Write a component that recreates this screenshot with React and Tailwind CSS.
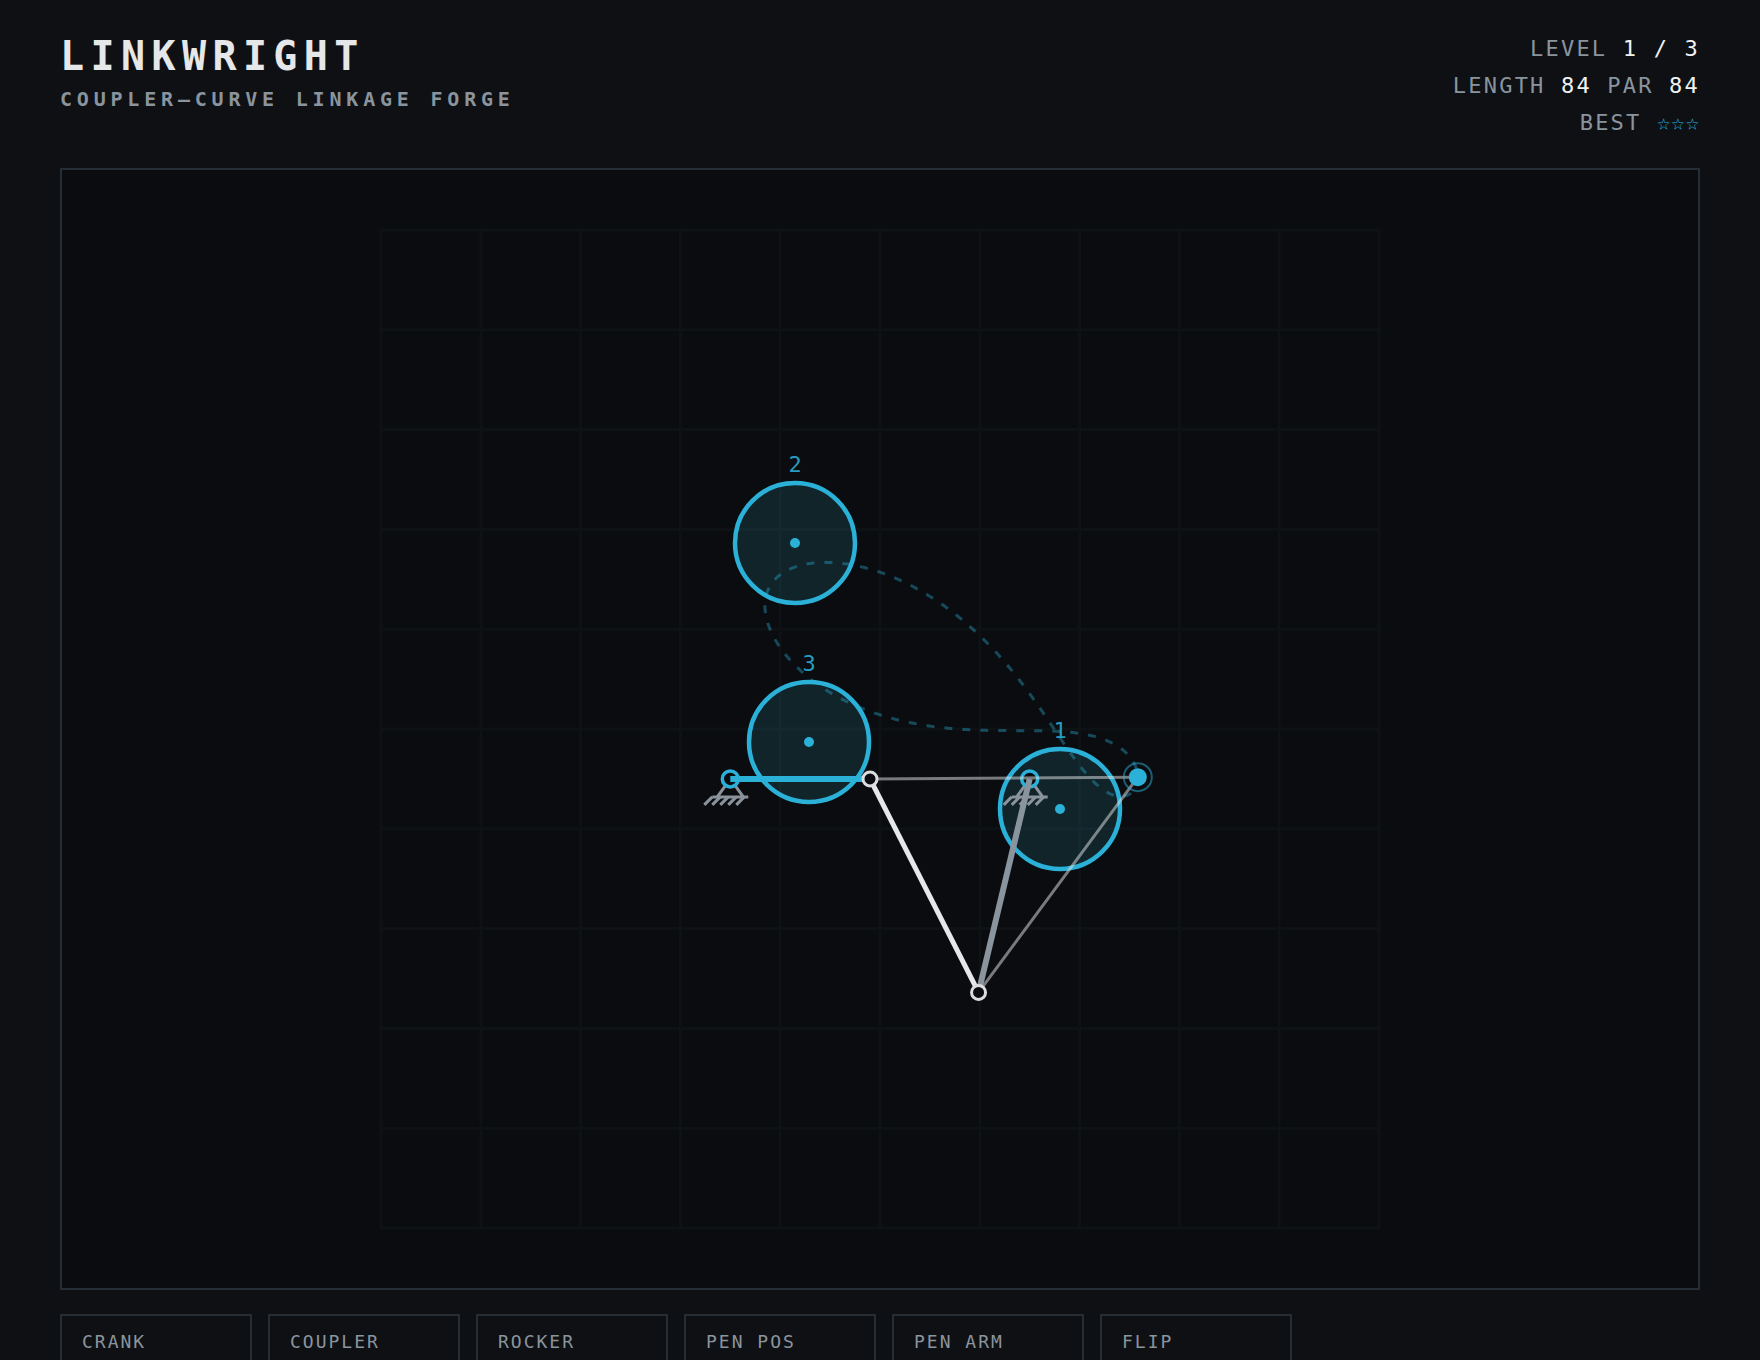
import React from 'react';

const UNIT = 9.98;
const CENTER = { x: 818, y: 559 };

// Link lengths in grid units, ten units to a grid cell
const LINKAGE = { crank: 14, coupler: 24, rocker: 22, penPos: 0.5, penArm: 24 };
const PIVOT_A = { x: -15, y: -5 };
const PIVOT_D = { x: 15, y: -5 };

const GATES = [
  { label: '1', x: 998, y: 639 },
  { label: '2', x: 733, y: 373 },
  { label: '3', x: 747, y: 572 },
];

const CONTROLS = ['CRANK', 'COUPLER', 'ROCKER', 'PEN POS', 'PEN ARM', 'FLIP'];

const toScreen = (p) => ({
  x: CENTER.x + p.x * UNIT,
  y: CENTER.y - p.y * UNIT,
});

const solve = (angle) => {
  const { crank, coupler, rocker, penPos, penArm } = LINKAGE;
  const b = {
    x: PIVOT_A.x + crank * Math.cos(angle),
    y: PIVOT_A.y + crank * Math.sin(angle),
  };
  const dx = PIVOT_D.x - b.x;
  const dy = PIVOT_D.y - b.y;
  const d = Math.hypot(dx, dy);
  const along = (coupler ** 2 - rocker ** 2 + d ** 2) / (2 * d);
  const off = Math.sqrt(Math.max(0, coupler ** 2 - along ** 2));
  const c = {
    x: b.x + (along * dx + off * dy) / d,
    y: b.y + (along * dy - off * dx) / d,
  };
  const ux = (c.x - b.x) / coupler;
  const uy = (c.y - b.y) / coupler;
  const pen = {
    x: b.x + ux * coupler * penPos - uy * penArm,
    y: b.y + uy * coupler * penPos + ux * penArm,
  };
  return { b: toScreen(b), c: toScreen(c), pen: toScreen(pen) };
};

const curvePath = () => {
  const steps = 360;
  let d = '';
  for (let i = 0; i <= steps; i++) {
    const { pen } = solve((i / steps) * Math.PI * 2);
    d += `${i === 0 ? 'M' : 'L'}${pen.x.toFixed(2)} ${pen.y.toFixed(2)}`;
  }
  return d;
};

const Grid = () => {
  const lines = Array.from({ length: 11 }, (_, i) => (i - 5) * 10 * UNIT);
  const half = 50 * UNIT;
  return (
    <g stroke="#0e1215" strokeWidth="3">
      {lines.map((v) => (
        <React.Fragment key={v}>
          <line x1={CENTER.x + v} y1={CENTER.y - half} x2={CENTER.x + v} y2={CENTER.y + half} />
          <line x1={CENTER.x - half} y1={CENTER.y + v} x2={CENTER.x + half} y2={CENTER.y + v} />
        </React.Fragment>
      ))}
    </g>
  );
};

const Gate = ({ gate }) => (
  <g>
    <circle cx={gate.x} cy={gate.y} r="60" fill="#34b0cc" fillOpacity="0.15" stroke="#2bb0d8" strokeWidth="4.5" />
    <circle cx={gate.x} cy={gate.y} r="5" fill="#2bb0d8" />
    <text
      x={gate.x}
      y={gate.y - 71}
      textAnchor="middle"
      fill="#2bb0d8"
      fillOpacity="0.9"
      className="text-[22px]"
    >
      {gate.label}
    </text>
  </g>
);

const Ground = ({ at }) => (
  <g transform={`translate(${at.x} ${at.y})`} fill="none" stroke="#8a929c" strokeWidth="3">
    <path d="M0 0L-13 18M0 0L13 18M-18 18H18" />
    <path d="M-18 18l-8 8M-10 18l-8 8M-2 18l-8 8M6 18l-8 8M14 18l-8 8" />
    <circle r="8" fill="#0a0c0f" stroke="#2bb0d8" strokeWidth="3.5" />
  </g>
);

const Joint = ({ at }) => (
  <circle cx={at.x} cy={at.y} r="7" fill="#0a0c0f" stroke="#dcddde" strokeWidth="3" />
);

const Link = ({ from, to, ...rest }) => (
  <line x1={from.x} y1={from.y} x2={to.x} y2={to.y} {...rest} />
);

const Board = () => {
  const a = toScreen(PIVOT_A);
  const d = toScreen(PIVOT_D);
  const { b, c, pen } = solve(0);

  return (
    <svg viewBox="0 0 1636 1118" className="block h-auto w-full" role="img" aria-label="Linkage board">
      <Grid />
      <path d={curvePath()} fill="none" stroke="#2bb0d8" strokeOpacity="0.38" strokeWidth="3" strokeDasharray="8 10" />
      {GATES.map((gate) => (
        <Gate key={gate.label} gate={gate} />
      ))}
      <Ground at={a} />
      <Ground at={d} />
      <Link from={b} to={pen} stroke="#e6e7e9" strokeOpacity="0.5" strokeWidth="3" />
      <Link from={c} to={pen} stroke="#e6e7e9" strokeOpacity="0.5" strokeWidth="3" />
      <Link from={a} to={b} stroke="#2bb0d8" strokeWidth="6" />
      <Link from={d} to={c} stroke="#8a949e" strokeWidth="6" />
      <Link from={b} to={c} stroke="#e6e7e9" strokeWidth="5" />
      <Joint at={b} />
      <Joint at={c} />
      <circle cx={pen.x} cy={pen.y} r="9" fill="#2bb0d8" />
      <circle cx={pen.x} cy={pen.y} r="14" fill="none" stroke="#2bb0d8" strokeOpacity="0.5" strokeWidth="2" />
    </svg>
  );
};

const Header = () => (
  <header className="flex items-start justify-between">
    <div>
      <h1 className="text-[40px] leading-[52px] font-bold tracking-[0.16em] text-[#e6e7e9]">LINKWRIGHT</h1>
      <p className="mt-px text-[20px] leading-[32px] font-bold tracking-[0.24em]">COUPLER–CURVE LINKAGE FORGE</p>
    </div>
    <div className="text-right text-[22px] leading-[37px] tracking-[0.1em]">
      <div>LEVEL <span className="text-[#f0f1f2]">1 / 3</span></div>
      <div>LENGTH <span className="text-[#f0f1f2]">84</span> PAR <span className="text-[#f0f1f2]">84</span></div>
      <div>BEST <span className="tracking-[0.05em] text-[#2bb0d8]">☆☆☆</span></div>
    </div>
  </header>
);

export default function App() {
  return (
    <div className="h-screen overflow-hidden bg-[#0e1013] px-[60px] pt-[30px] font-['DejaVu_Sans_Mono',monospace] text-[#8a949e]">
      <Header />
      <main className="mt-[27px] border-2 border-[#262d34] bg-[#0a0c0f]">
        <Board />
      </main>
      <div className="mt-6 flex gap-4">
        {CONTROLS.map((name) => (
          <div
            key={name}
            className="h-32 w-48 border-2 border-[#262d34] px-5 py-3 text-[18px] leading-[28px] tracking-[2px]"
          >
            {name}
          </div>
        ))}
      </div>
    </div>
  );
}
